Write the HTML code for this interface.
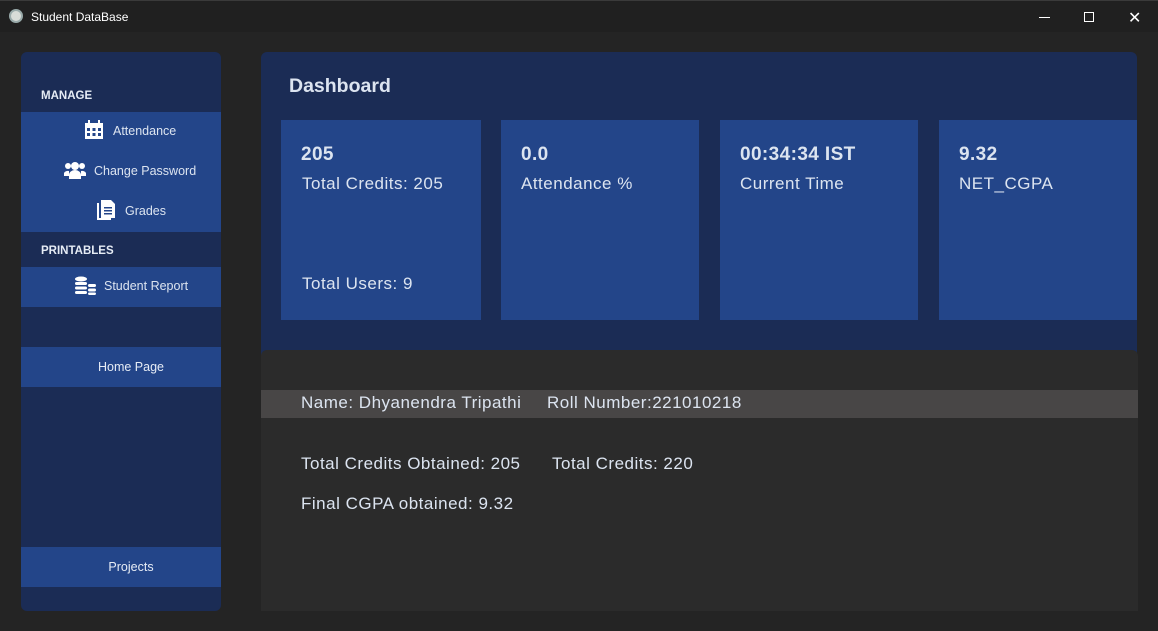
<!DOCTYPE html>
<html><head><style>
*{margin:0;padding:0;box-sizing:border-box}
body{width:1158px;height:631px;background:#242424;font-family:"Liberation Sans",sans-serif;position:relative;overflow:hidden;color:#dce4f0}
.a{position:absolute}
.tb{left:0;top:0;width:1158px;height:32px;background:#202020;border-top:1px solid #3a3a3a}
.side{left:21px;top:52px;width:200px;height:559px;background:#1b2c55;border-radius:6px;overflow:hidden}
.btn{position:absolute;left:0;width:200px;height:40px;background:#234589;font-size:12.5px;color:#e6ecf5}
.hd{position:absolute;left:20px;font-size:11.5px;font-weight:bold;color:#e6ecf5}
.card{top:120px;height:200px;background:#234589}
.big{font-size:19px;font-weight:bold;letter-spacing:0.4px}
.sm{font-size:17px;letter-spacing:0.5px}
</style></head><body>
<div class="a tb">
 <div class="a" style="left:9px;top:8px;width:14px;height:14px;border-radius:50%;background:#d8dcd8;border:2px solid #9aa"></div>
 <div class="a" style="left:31px;top:9px;font-size:12px;color:#fff">Student DataBase</div>
 <div class="a" style="left:1039px;top:16px;width:11px;height:1px;background:#fff"></div>
 <div class="a" style="left:1084px;top:11px;width:10px;height:10px;border:1px solid #fff"></div>
 <div class="a" style="left:1128px;top:7px;font-size:16px;color:#fff">✕</div>
</div>
<div class="a side">
 <div class="hd" style="top:38px">MANAGE</div>
 <div class="btn" style="top:60px;height:120px"></div>
 <svg class="a" style="left:63px;top:68px" width="20" height="20" viewBox="0 0 20 20"><rect x="1" y="3" width="18" height="16" fill="#fff"/><rect x="4" y="0" width="2" height="5" fill="#fff"/><rect x="14" y="0" width="2" height="5" fill="#fff"/><g fill="#234589"><rect x="3" y="8" width="3" height="3"/><rect x="8.5" y="8" width="3" height="3"/><rect x="14" y="8" width="3" height="3"/><rect x="3" y="13" width="3" height="3"/><rect x="8.5" y="13" width="3" height="3"/><rect x="14" y="13" width="3" height="3"/></g></svg>
 <div class="a" style="left:92px;top:72px;font-size:12.5px">Attendance</div>
 <svg class="a" style="left:43px;top:109px" width="22" height="18" viewBox="0 0 22 18"><g fill="#fff"><circle cx="11" cy="5" r="4"/><circle cx="4" cy="5" r="3"/><circle cx="18" cy="5" r="3"/><path d="M5 18v-4a6 5 0 0 1 12 0v4z"/><path d="M0 15v-3a4 3 0 0 1 5-2v5z"/><path d="M22 15v-3a4 3 0 0 0-5-2v5z"/></g></svg>
 <div class="a" style="left:73px;top:112px;font-size:12.5px">Change Password</div>
 <svg class="a" style="left:76px;top:148px" width="18" height="20" viewBox="0 0 18 20"><path d="M0 3h2v15h12v2H0z" fill="#fff"/><path d="M4 0h10l4 4v14H4z" fill="#fff"/><g fill="#234589"><rect x="7" y="7" width="8" height="1.5"/><rect x="7" y="10" width="8" height="1.5"/><rect x="7" y="13" width="8" height="1.5"/></g></svg>
 <div class="a" style="left:104px;top:152px;font-size:12.5px">Grades</div>
 <div class="hd" style="top:193px">PRINTABLES</div>
 <div class="btn" style="top:215px"></div>
 <svg class="a" style="left:53px;top:224px" width="22" height="20" viewBox="0 0 22 20"><g fill="#fff"><ellipse cx="7" cy="3" rx="6" ry="2.5"/><rect x="1" y="6" width="12" height="3" rx="1.5"/><rect x="1" y="10.5" width="12" height="3" rx="1.5"/><rect x="1" y="15" width="12" height="3" rx="1.5"/><rect x="14" y="8" width="8" height="3" rx="1.5"/><rect x="14" y="12.5" width="8" height="3" rx="1.5"/><rect x="14" y="16.5" width="8" height="2.5" rx="1.2"/></g></svg>
 <div class="a" style="left:83px;top:227px;font-size:12.5px">Student Report</div>
 <div class="btn" style="top:295px;text-align:center;line-height:40px;padding-left:20px">Home Page</div>
 <div class="btn" style="top:495px;text-align:center;line-height:40px;padding-left:20px">Projects</div>
</div>
<div class="a" style="left:261px;top:52px;width:876px;height:559px;background:#1b2c55;border-radius:6px 6px 0 0"></div>
<div class="a" style="left:289px;top:75px;font-size:19.5px;font-weight:bold">Dashboard</div>
<div class="a card" style="left:281px;width:200px"><div class="a big" style="left:20px;top:24px">205</div><div class="a sm" style="left:21px;top:54px">Total Credits: 205</div><div class="a sm" style="left:21px;top:154px">Total Users: 9</div></div>
<div class="a card" style="left:501px;width:198px"><div class="a big" style="left:20px;top:24px">0.0</div><div class="a sm" style="left:20px;top:54px">Attendance %</div></div>
<div class="a card" style="left:720px;width:198px"><div class="a big" style="left:20px;top:24px">00:34:34 IST</div><div class="a sm" style="left:20px;top:54px">Current Time</div></div>
<div class="a card" style="left:939px;width:198px"><div class="a big" style="left:20px;top:24px">9.32</div><div class="a sm" style="left:20px;top:54px">NET_CGPA</div></div>
<div class="a" style="left:261px;top:350px;width:877px;height:261px;background:#2b2b2b;border-radius:6px 6px 0 0"></div>
<div class="a" style="left:261px;top:390px;width:877px;height:28px;background:#484646"></div>
<div class="a sm" style="left:301px;top:393px">Name: Dhyanendra Tripathi</div>
<div class="a sm" style="left:547px;top:393px">Roll Number:221010218</div>
<div class="a sm" style="left:301px;top:454px">Total Credits Obtained: 205</div>
<div class="a sm" style="left:552px;top:454px">Total Credits: 220</div>
<div class="a sm" style="left:301px;top:494px">Final CGPA obtained: 9.32</div>
</body></html>
